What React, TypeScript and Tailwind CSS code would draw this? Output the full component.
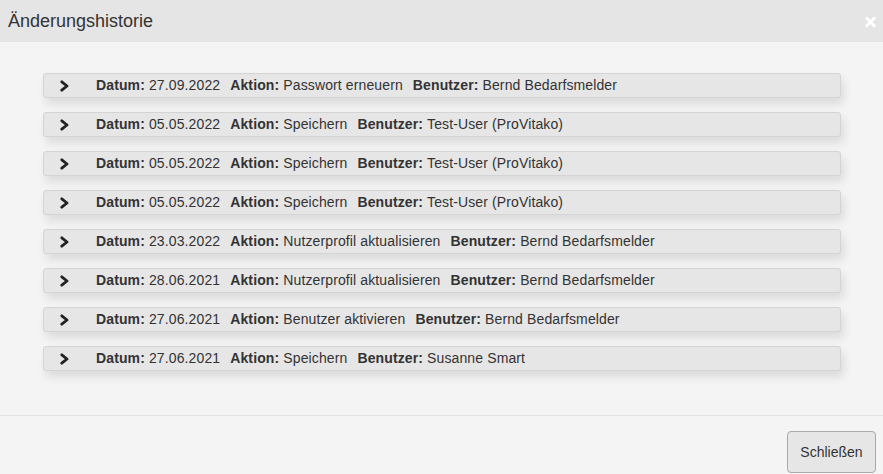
const entries = [
  { datum: '27.09.2022', aktion: 'Passwort erneuern', benutzer: 'Bernd Bedarfsmelder' },
  { datum: '05.05.2022', aktion: 'Speichern', benutzer: 'Test-User (ProVitako)' },
  { datum: '05.05.2022', aktion: 'Speichern', benutzer: 'Test-User (ProVitako)' },
  { datum: '05.05.2022', aktion: 'Speichern', benutzer: 'Test-User (ProVitako)' },
  { datum: '23.03.2022', aktion: 'Nutzerprofil aktualisieren', benutzer: 'Bernd Bedarfsmelder' },
  { datum: '28.06.2021', aktion: 'Nutzerprofil aktualisieren', benutzer: 'Bernd Bedarfsmelder' },
  { datum: '27.06.2021', aktion: 'Benutzer aktivieren', benutzer: 'Bernd Bedarfsmelder' },
  { datum: '27.06.2021', aktion: 'Speichern', benutzer: 'Susanne Smart' },
];

function Chevron() {
  return (
    <svg viewBox="0 0 12 12" className="h-[12px] w-[12px] shrink-0">
      <path d="M2.8 1.8 L8 6 L2.8 10.2" fill="none" stroke="#222" strokeWidth="2.8" strokeLinejoin="round" strokeLinecap="round" />
    </svg>
  );
}

export default function App() {
  return (
    <div
      className="flex h-[474px] w-[883px] flex-col bg-[#f4f4f4] text-[#333]"
      style={{ fontFamily: '"Liberation Sans", Arial, sans-serif' }}
    >
      <div className="flex h-[42px] items-center justify-between bg-[#e5e5e5] pl-[8px] pr-[7px]">
        <h1 className="text-[18px] leading-none text-[#333]">Änderungshistorie</h1>
        <svg viewBox="0 0 12 12" className="mt-[2px] h-[12px] w-[11px]">
          <path d="M2 2 L10 10 M10 2 L2 10" stroke="#fff" strokeWidth="3.2" strokeLinecap="round" />
        </svg>
      </div>

      <div className="flex flex-1 flex-col gap-[14px] pl-[43px] pr-[42px] pt-[31px]">
        {entries.map((e, i) => (
          <div
            key={i}
            className="flex h-[25px] items-center rounded-[3px] border border-[#d4d4d4] bg-[#e6e6e6] pl-[15px] text-[14px] tracking-[0.12px] shadow-[3px_6px_10px_rgba(0,0,0,0.1)]"
          >
            <Chevron />
            <span className="ml-[25px] font-bold">Datum:</span>
            <span className="ml-[4px]">{e.datum}</span>
            <span className="ml-[10px] font-bold">Aktion:</span>
            <span className="ml-[4px]">{e.aktion}</span>
            <span className="ml-[10px] font-bold">Benutzer:</span>
            <span className="ml-[4px]">{e.benutzer}</span>
          </div>
        ))}
      </div>

      <div className="flex h-[59px] justify-end border-t border-[#e2e2e2] pr-[7px] pt-[15px]">
        <button
          type="button"
          className="h-[42px] w-[89px] rounded-[4px] border border-[#a9a9a9] bg-[#e6e6e6] text-[14px] text-[#333]"
        >
          Schließen
        </button>
      </div>
    </div>
  );
}
